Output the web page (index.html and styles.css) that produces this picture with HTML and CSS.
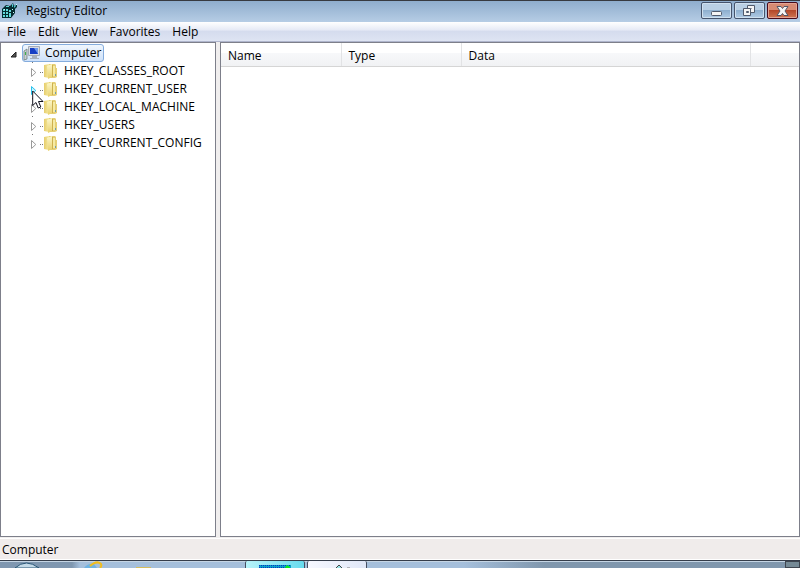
FILE: index.html
```html
<!DOCTYPE html>
<html lang="en">
<head>
<meta charset="utf-8">
<title>Registry Editor</title>
<link rel="stylesheet" href="styles.css">
</head>
<body>
<svg class="defs" aria-hidden="true">
  <defs>
    <linearGradient id="gold"><stop offset="0" stop-color="#e6cd6c"/><stop offset="1" stop-color="#f6eba2"/></linearGradient>
    <linearGradient id="leaf" x2="0" y2="1"><stop offset="0" stop-color="#fdf8cc"/><stop offset="1" stop-color="#e8d06a"/></linearGradient>
    <symbol id="folder" viewBox="0 0 15 16">
      <path d="M1 2l5-1v14l-5-1z" fill="url(#gold)"/>
      <path d="M6 1h6l1 1v3h1v9l-2 1H6z" fill="#e5cf76"/>
      <path d="M4 3l5-2v13l-4 2z" fill="url(#leaf)"/>
      <path d="M10 3h2v10h-2z" fill="#f6eba4"/>
      <path d="M9.500 2v12" stroke="#cdb04e"/>
      <path d="M12 11h1v2h-1z" fill="#6f9db0"/>
    </symbol>
    <symbol id="closed" viewBox="0 0 7 9"><path d="M1.500 .5v8L5.800 4.500z" fill="#fff" stroke="#999"/></symbol>
  </defs>
</svg>
<header class="titlebar">
  <svg class="app-icon" viewBox="0 0 18 17" aria-hidden="true">
    <path d="M0 7l4-4 4 1 3-3 1 3 3-2v3l-2 2v4l-4 5H0z" fill="#052b2e"/>
    <path d="M1 7h2v2H1zM4 7h2v2H4zM1 10h2v2H1zM4 10h2v2H4zM1 13h2v2H1zM4 13h2v2H4zM7 8h2v2H7zM7 11h2v4H7zM4 4h3v1H4z" fill="#62dadb"/>
    <path d="M10 2h1v3h-1zM12 4l2-1v1l-2 2z" fill="#4fc8cc"/>
    <path d="M10 7h1v1h-1zM14 2h1v1h-1zM11 10h1v1h-1zM2 7h1v1H2z" fill="#c5ffff"/>
  </svg>
  <h1 class="title">Registry Editor</h1>
  <div class="controls">
    <button class="control" aria-label="Minimize"><svg viewBox="0 0 18 14"><rect x="3.500" y="7.500" width="10" height="4" rx="1" fill="#f4f4f4" stroke="#515a6c"/></svg></button>
    <button class="control" aria-label="Restore"><svg viewBox="0 0 18 14"><path d="M6.500 1.500h7v7h-7z" fill="#f4f4f4" stroke="#515a6c"/><path d="M9.500 4.500h1" stroke="#515a6c"/><path d="M2.500 4.500h7v7h-7z" fill="#f4f4f4" stroke="#515a6c"/><path d="M5.500 7.500h2v1h-2z" fill="#8ab0d3" stroke="#515a6c"/></svg></button>
    <button class="control close" aria-label="Close"><svg viewBox="0 0 18 14"><path d="M3 2.500h4l1.500 2L10 2.500h4l-3 4.500 3 4.500h-4L8.500 9.500 7 11.500H3L6 7z" fill="#f4f4f4" stroke="#535666"/></svg></button>
  </div>
</header>
<nav class="menu" aria-label="Main menu">
  <button>File</button><button>Edit</button><button>View</button><button>Favorites</button><button>Help</button>
</nav>
<main class="panes">
  <section class="tree" aria-label="Registry keys">
    <div class="row root">
      <svg class="open-arrow" viewBox="0 0 7 7" aria-hidden="true"><path d="M6 1v5H1z" fill="#555" stroke="#222"/></svg>
      <div class="selected">
        <svg class="computer" viewBox="0 0 20 16" aria-hidden="true">
          <path d="M1 6l3-2v10l-3 1z" fill="#c9d0d2" stroke="#71817d" stroke-width=".8"/>
          <path d="M2 7h1v3H2z" fill="#3eb04b"/>
          <path d="M5.500 1.500h11v9h-11z" fill="#d8dce2" stroke="#a6acb6"/>
          <path d="M7 3h8v6H7z" fill="#173fc4"/>
          <path d="M11 3h4v6z" fill="#6e99ed"/>
          <path d="M9 11h5v2h2v1H7v-1h2z" fill="#a7b0bb"/>
        </svg>
        <span>Computer</span>
      </div>
    </div>
    <ul class="keys">
      <li class="row"><svg class="arrow"><use href="#closed"/></svg><i></i><svg class="folder"><use href="#folder"/></svg><span>HKEY_CLASSES_ROOT</span></li>
      <li class="row hot"><svg class="arrow" viewBox="0 0 7 9"><path d="M1.500 .5v8L5.800 4.500z" fill="#c6f1fc" stroke="#27c1ed"/></svg><i></i><svg class="folder"><use href="#folder"/></svg><span>HKEY_CURRENT_USER</span>
        <svg class="cursor" viewBox="0 0 12 19" aria-hidden="true"><path d="M.7 1v14.500L4 12.500l2.200 5.500 2.600-1-2.300-5.500H11z" fill="#fff" stroke="#10101c"/></svg></li>
      <li class="row"><svg class="arrow"><use href="#closed"/></svg><i></i><svg class="folder"><use href="#folder"/></svg><span>HKEY_LOCAL_MACHINE</span></li>
      <li class="row"><svg class="arrow"><use href="#closed"/></svg><i></i><svg class="folder"><use href="#folder"/></svg><span>HKEY_USERS</span></li>
      <li class="row"><svg class="arrow"><use href="#closed"/></svg><i></i><svg class="folder"><use href="#folder"/></svg><span>HKEY_CURRENT_CONFIG</span></li>
    </ul>
  </section>
  <section class="values" aria-label="Values">
    <table>
      <colgroup><col class="narrow"><col class="narrow"><col><col class="rest"></colgroup>
      <thead><tr><th>Name</th><th>Type</th><th>Data</th><td></td></tr></thead>
    </table>
  </section>
</main>
<footer class="status">Computer</footer>
<div class="taskbar">
  <svg class="start" viewBox="0 0 30 7" aria-hidden="true"><path d="M3 7Q14-3 27 7z" fill="#c3d9e7" stroke="#285575"/></svg>
  <svg class="browser" viewBox="0 0 24 7" aria-hidden="true"><path d="M2 7q4-5 10-4l3 4" fill="#6fb3e2"/><path d="M8 5Q15-1 19 3q1 2-1 4" fill="none" stroke="#f2bd1d" stroke-width="2"/></svg>
  <svg class="explorer" viewBox="0 0 16 7" aria-hidden="true"><path d="M0 6h15v1H0z" fill="#d6bd5c"/></svg>
  <button class="task active" aria-label="System monitor"><svg viewBox="0 0 32 5"><path d="M0 1h32v4H0z" fill="#08a0c8"/><path d="M0 1.500h32M0 3.500h32" stroke="#0537c4" stroke-dasharray="1 1"/><path d="M25 5l3-4 3 2v2z" fill="#08f018"/></svg></button>
  <button class="task" aria-label="Registry Editor"><svg viewBox="0 0 32 5"><path d="M14 5l4-4 4 4z" fill="#9ae4e8" stroke="#444"/><path d="M26 4h3" stroke="#777"/></svg></button>
  <div class="tray"></div>
</div>
</body>
</html>
```
FILE: styles.css
```css
* { box-sizing: border-box; }
body {
  margin: 0;
  height: 100vh;
  display: flex;
  flex-direction: column;
  overflow: hidden;
  background: #f0eeee;
  color: #000;
  font: 12px/18px "Open Sans", "Noto Sans", sans-serif;
}
button { font: inherit; color: inherit; }
svg { display: block; flex: none; }
.defs { position: absolute; width: 0; height: 0; }

.titlebar {
  display: flex;
  align-items: flex-start;
  height: 22px;
  padding-left: 2px;
  border-top: 1px solid #373a40;
  background: linear-gradient(#8fadcd, #b6cde5);
}
.app-icon { width: 18px; height: 17px; margin-top: 1px; }
.title { flex: 1; margin: 1px 0 0 6px; font-size: 12px; font-weight: 400; }
.controls { display: flex; gap: 2px; padding: 1px 2px 0 0; }
.control {
  display: grid;
  place-items: center;
  width: 31px;
  height: 17px;
  padding: 0;
  border: 1px solid #45536c;
  border-radius: 2px;
  background: linear-gradient(#b9cfe4 50%, #8eafcf 50%, #b0cbe5);
  box-shadow: inset 0 0 0 1px #cfe0ef;
}
.control svg { width: 18px; height: 14px; }
.close {
  border-color: #480b1b;
  background: linear-gradient(#d78b73 45%, #b4482a 50%, #cf7652);
  box-shadow: inset 0 0 0 1px #e4a493;
}

.menu {
  display: flex;
  height: 20px;
  flex: none;
  padding-left: 1px;
  border-bottom: 1px solid #afb5cc;
  background: linear-gradient(#fff, #e7ebf6 40%, #d5dcee 50%, #dee4f3);
}
.menu button { padding: 0 6px; border: 0; background: none; }

.panes { display: flex; flex: 1; min-height: 0; gap: 4px; }
.tree, .values { border: 1px solid #7d7f8a; background: #fff; }
.tree { width: 27%; padding-top: 1px; }
.values { flex: 1; }
.row { display: flex; align-items: center; height: 18px; }
.root { padding-left: 9px; }
.open-arrow { width: 7px; height: 7px; margin-top: 2px; }
.selected {
  display: flex;
  align-items: center;
  gap: 2px;
  height: 18px;
  margin-left: 5px;
  padding-right: 1px;
  border: 1px solid #84acdd;
  border-radius: 3px;
  background: linear-gradient(#f0f6fd, #cee1f9);
}
.computer { width: 20px; height: 16px; }
.keys {
  margin: 0;
  padding: 0 0 0 29px;
  list-style: none;
}
.keys .row {
  background: repeating-linear-gradient(#777 0 1px, transparent 1px 18px) 2px 0 / 1px 18px no-repeat;
}
.arrow { width: 7px; height: 9px; margin-top: 2px; }
.keys i { width: 3px; margin: 2px 0 0 3px; border-top: 1px dotted #777; }
.folder { width: 15px; height: 16px; margin-right: 6px; }
.hot { position: relative; }
.cursor { position: absolute; z-index: 1; left: 2px; top: 10px; width: 12px; height: 19px; }

table { width: 100%; border-collapse: collapse; table-layout: fixed; }
.narrow { width: 120px; }
.rest { width: 49px; }
tr { height: 23px; background: linear-gradient(#fff 45%, #f7f8fa 45%, #f1f2f4); }
th, td {
  padding: 3px 7px 0;
  border-right: 1px solid #e2e3e5;
  border-bottom: 1px solid #d5d5d5;
  font-weight: 400;
  text-align: left;
}
td { border-right: 0; }

.status {
  height: 22px;
  flex: none;
  margin-top: 1px;
  padding: 2px 2px 0;
  border-top: 1px solid #fff;
  border-bottom: 1px solid #fff;
  background: #f0eceb;
}
.taskbar {
  display: flex;
  flex: none;
  height: 8px;
  overflow: hidden;
  border-top: 1px solid #353d4a;
  background: linear-gradient(90deg, #7f97b0 9%, #a5bfdb 10%, #a5bfdb 58%, #8097ad 68%);
  box-shadow: inset 0 1px #c5d5e4;
}
.start { width: 30px; height: 7px; margin-left: 12px; }
.browser { width: 24px; height: 7px; margin-left: 40px; }
.explorer { width: 16px; height: 7px; margin-left: 30px; }
.task {
  width: 60px;
  height: 8px;
  flex: none;
  padding: 2px 0 0 13px;
  border: 1px solid #454e60;
  border-top: 0;
  border-bottom: 0;
  border-radius: 2px 2px 0 0;
  background: linear-gradient(90deg, #f6f8ff, #e0e7f7);
}
.task svg { width: 32px; height: 5px; }
.task + .task { margin-left: 2px; }
.active { margin-left: 93px; background: linear-gradient(90deg, #b7f3fa, #66dbee); }
.tray { width: 15px; margin-left: auto; border: 1px solid #3f4650; background: #758a96; }
```
